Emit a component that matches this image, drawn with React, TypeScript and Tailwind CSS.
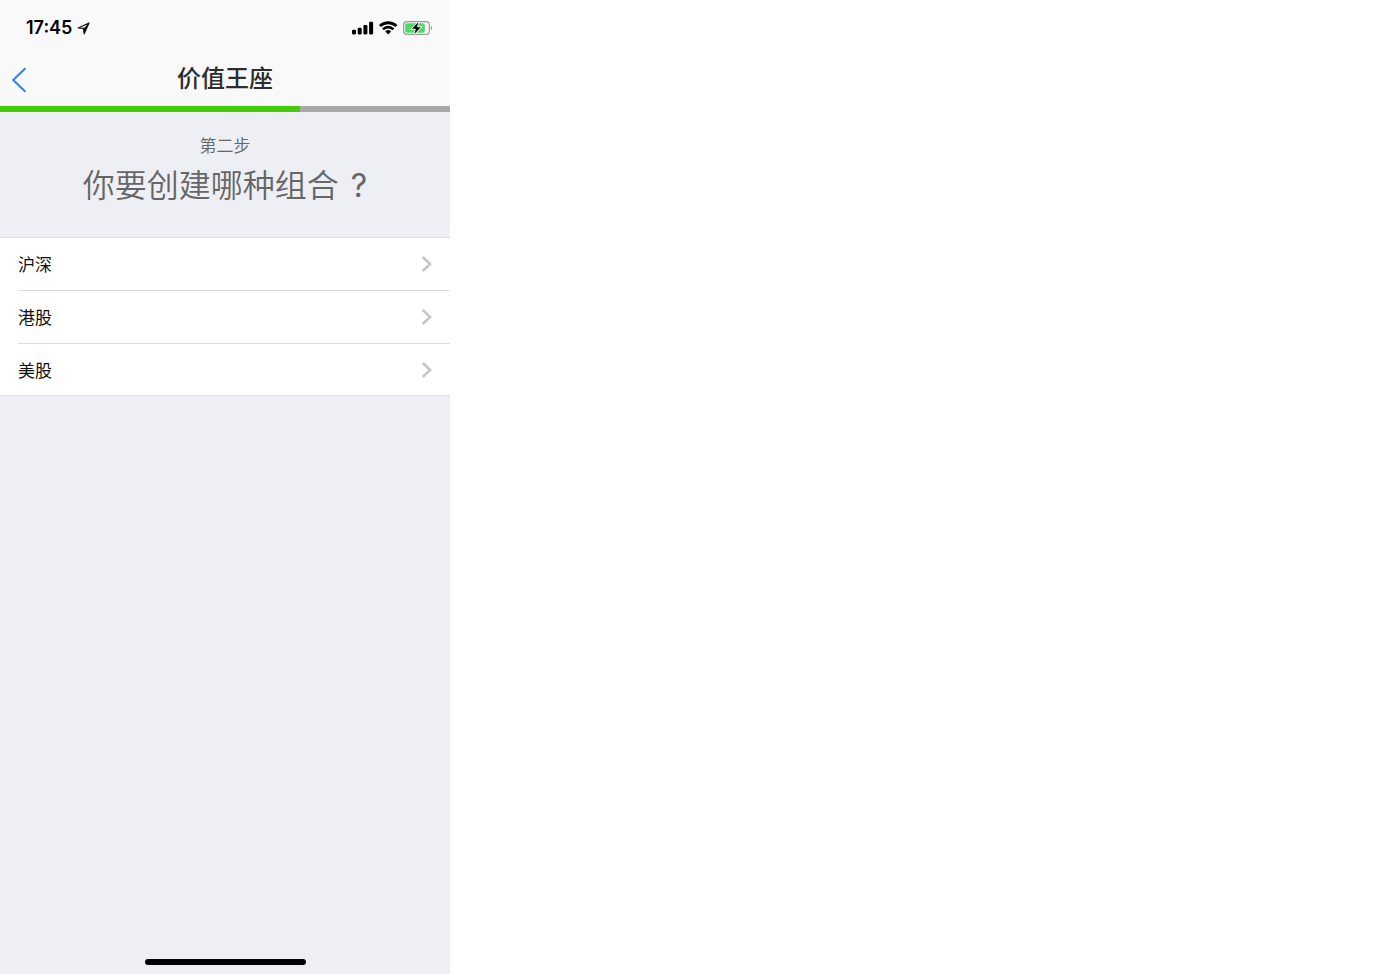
const markets = ["沪深", "港股", "美股"];

const StatusBar = () => {
  return (
    <div className="flex h-14 items-center justify-between pl-[26px] pr-[17px] text-black">
      <div className="flex items-center gap-[5px] font-['Inter'] text-lg font-semibold">
        <span>17:45</span>
        <svg width="13" height="13" viewBox="0 0 13 13" fill="none" aria-hidden="true">
          <path d="M12 1 1.2 6 6.6 6.4 7.2 11.8Z" stroke="#111" strokeWidth="1.2" strokeLinejoin="round" />
          <path d="M12 1 6 7 7.2 11.8Z" fill="#111" />
        </svg>
      </div>
      <div className="flex items-center gap-[5px]">
        <svg width="22" height="14" viewBox="0 0 22 14" aria-hidden="true">
          <rect x="0" y="8.8" width="4" height="4.6" rx="1.1" />
          <rect x="5.7" y="6.8" width="4" height="6.6" rx="1.1" />
          <rect x="11.4" y="4" width="4" height="9.4" rx="1.1" />
          <rect x="17.1" y="0.8" width="4" height="12.6" rx="1.1" />
        </svg>
        <svg width="19" height="14" viewBox="0 0 19 14" aria-hidden="true">
          <path d="M1 5a11.8 11.8 0 0 1 16.4 0" fill="none" stroke="#000" strokeWidth="2.9" />
          <path d="M4 8.3a7.3 7.3 0 0 1 10.4 0" fill="none" stroke="#000" strokeWidth="2.6" />
          <path d="M6.3 10.5a4.2 4.2 0 0 1 5.8 0L9.2 13.5Z" />
        </svg>
        <svg width="30" height="14" viewBox="0 0 30 14" aria-hidden="true">
          <rect x="0.7" y="0.7" width="25.6" height="12.6" rx="3.4" fill="none" stroke="#999" strokeWidth="1.2" />
          <path d="M27.8 4.9c1.7.6 1.7 3.6 0 4.2Z" fill="#999" />
          <rect x="2.2" y="2.3" width="19.6" height="9.4" rx="1.6" fill="#4cd964" />
          <path d="M15.4 1 9 7.8h3.8l-1.4 5.2L17.8 6.2H14Z" fill="#000" stroke="#f9f9f9" strokeWidth="1.8" paintOrder="stroke" />
        </svg>
      </div>
    </div>
  );
};

const NavBar = () => {
  return (
    <nav className="grid h-[50px] grid-cols-[1fr_auto_1fr] items-center pb-1">
      <button type="button" aria-label="返回" className="cursor-pointer justify-self-start pl-3 pt-[2px]">
        <svg width="15" height="26" viewBox="0 0 15 26" fill="none">
          <path d="M13.4 1.2 1.2 13 13.4 24.8" stroke="#3c82e0" strokeWidth="2.2" />
        </svg>
      </button>
      <h1 className="pb-1 text-2xl font-medium text-[#2d2d2d]">价值王座</h1>
    </nav>
  );
};

const App = () => {
  return (
    <div className="min-h-screen bg-white">
      <div className="flex min-h-screen w-full max-w-[450px] flex-col bg-[#eeeff5] font-['Noto_Sans_CJK_SC',sans-serif]">
        <header className="bg-[#f9f9f9]">
          <StatusBar />
          <NavBar />
          <div className="h-[6px] bg-[#a9a9a9]">
            <div className="h-full w-2/3 bg-[#42ce06]" />
          </div>
        </header>

        <main className="flex-1">
          <div className="h-[125px] pt-[21px] text-center text-[#666]">
            <p className="text-[17px] leading-6 font-[350]">第二步</p>
            <h2 className="mt-[2px] flex items-baseline justify-center gap-3 text-[32px] leading-12 font-[350]">
              <span>你要创建哪种组合</span>
              <span className="font-['Inter'] font-normal">?</span>
            </h2>
          </div>

          <ul className="border-y border-[#e0e0e3] bg-white">
            {markets.map((market) => (
              <li key={market} className="group pl-[18px]">
                <button
                  type="button"
                  className="flex h-[53px] w-full cursor-pointer items-center justify-between border-b border-[#dcdce0] pr-[18px] text-left text-[17px] text-[#111] group-last:h-[51px] group-last:border-b-0"
                >
                  <span>{market}</span>
                  <svg width="11" height="16" viewBox="0 0 11 16" fill="none" aria-hidden="true">
                    <path d="M1.7 1 9.2 8l-7.5 7" stroke="#c4c4c8" strokeWidth="2.4" />
                  </svg>
                </button>
              </li>
            ))}
          </ul>
        </main>

        <footer className="flex justify-center pb-[9px]">
          <div className="h-[6px] w-[161px] rounded-full bg-black" />
        </footer>
      </div>
    </div>
  );
};

export default App;
